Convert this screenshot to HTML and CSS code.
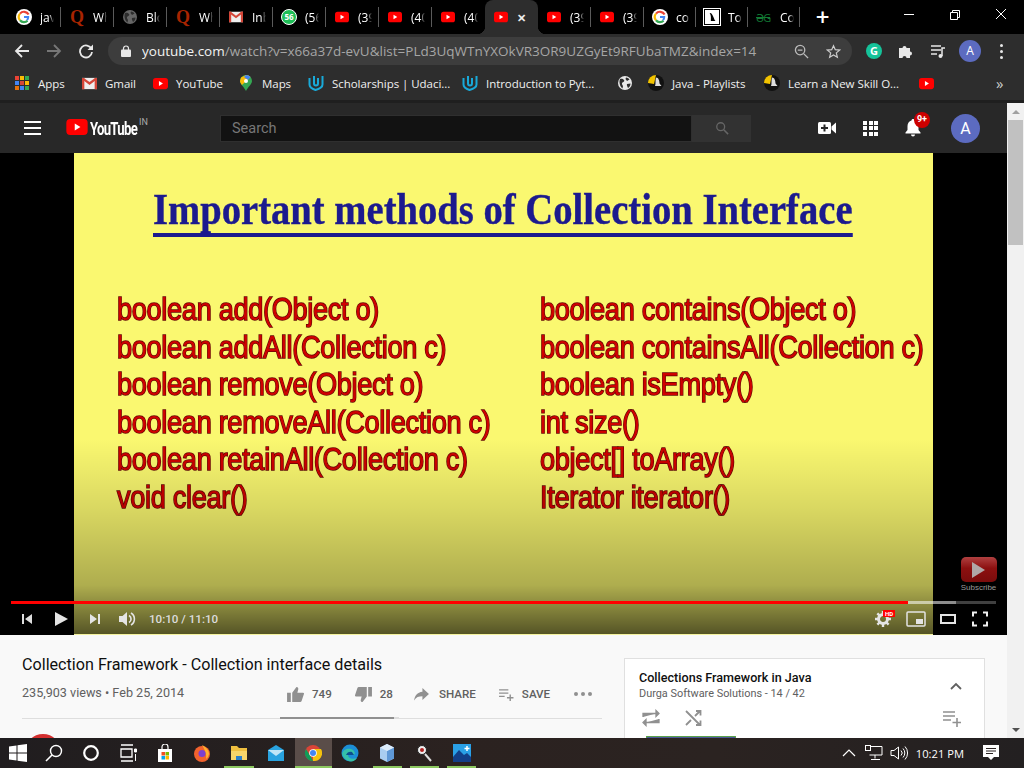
FILE: index.html
```html
<!DOCTYPE html>
<html lang="en">
<head>
<meta charset="utf-8">
<title>Collection Framework - Collection interface details</title>
<link rel="stylesheet" href="styles.css">
</head>
<body>
<svg class="defs" width="0" height="0" aria-hidden="true">
  <symbol id="yt" viewBox="0 0 16 12"><rect width="16" height="12" rx="3" fill="#f00"/><path d="M6.3 3.4 10.6 6 6.3 8.6z" fill="#fff"/></symbol>
  <symbol id="g" viewBox="0 0 16 16"><circle cx="8" cy="8" r="8" fill="#fff"/><path d="M12.6 5.6A5.2 5.2 0 0 0 4 4.6" fill="none" stroke="#ea4335" stroke-width="2.2"/><path d="M4 4.6a5.2 5.2 0 0 0 0 6.6" fill="none" stroke="#fbbc05" stroke-width="2.2"/><path d="M4 11.2a5.2 5.2 0 0 0 7.6.6" fill="none" stroke="#34a853" stroke-width="2.2"/><path d="M8 7h5.2v1.2a5 5 0 0 1-1.6 3.6L10.200 10.500a3 3 0 0 0 .8-1.500H8z" fill="#4285f4"/></symbol>
  <symbol id="globe" viewBox="0 0 16 16"><circle cx="8" cy="8" r="7" fill="currentColor"/><path d="M3 4c2-.5 3 0 4 1s-.5 2-1.500 2.500S5 10 6 11l-.5 2.500C3.500 12 1.500 8 3 4zM9 2.500c1.500 0 3 1 3.500 2L10 6 8.500 4zM10 9l3.500-.5c0 2-1 3.500-2.500 4.500-.5-1-1.500-3-1-4z" fill="#2d2d2d"/></symbol>
  <symbol id="gmail" viewBox="0 0 16 12"><rect width="16" height="12" fill="#eee"/><path d="M0 0h2.500v12H0zM13.500 0H16v12h-2.500z" fill="#d44638"/><path d="M0 0h2l6 4.500L14 0h2v1.500L8 7.500 0 1.500z" fill="#d44638"/></symbol>
  <symbol id="udacity" viewBox="0 0 16 16"><path d="M1.500 3v6.500c0 2.500 3 4.500 6 5.500 3-.8 7-3 7-5.500V1" fill="none" stroke="#19a9d8" stroke-width="2"/><path d="M6 1v7.500c0 1.500 1 2 2 2s2-.5 2-2V3" fill="none" stroke="#19a9d8" stroke-width="2"/></symbol>
  <symbol id="java" viewBox="0 0 16 16"><circle cx="8" cy="8" r="8" fill="#111"/><path d="M0 8a8 8 0 0 1 8-8L6 9z" fill="#f2c300"/><path d="M8 2.500c2.500 0 3.500 3 3.500 6l2 2.500H7c1-2 0-5.500 1-8.500z" fill="#ddd"/></symbol>
  <symbol id="search" viewBox="0 0 16 16"><circle cx="6.500" cy="6.500" r="4.500" fill="none" stroke="currentColor" stroke-width="1.500"/><path d="m10 10 5 5" stroke="currentColor" stroke-width="1.700"/></symbol>
</svg>

<div class="tabstrip">
  <div class="tab"><svg class="ico16"><use href="#g"/></svg><span class="tab-title">java</span><i class="sep"></i></div>
  <div class="tab"><span class="q">Q</span><span class="tab-title">Wh</span><i class="sep"></i></div>
  <div class="tab"><svg class="ico16 globe-dark"><use href="#globe"/></svg><span class="tab-title">Blo</span><i class="sep"></i></div>
  <div class="tab"><span class="q">Q</span><span class="tab-title">Wh</span><i class="sep"></i></div>
  <div class="tab"><svg class="ico14"><use href="#gmail"/></svg><span class="tab-title">Inb</span><i class="sep"></i></div>
  <div class="tab"><span class="wa">56</span><span class="tab-title">(56</span><i class="sep"></i></div>
  <div class="tab"><svg class="ico14"><use href="#yt"/></svg><span class="tab-title">(39</span><i class="sep"></i></div>
  <div class="tab"><svg class="ico14"><use href="#yt"/></svg><span class="tab-title">(40</span><i class="sep"></i></div>
  <div class="tab"><svg class="ico14"><use href="#yt"/></svg><span class="tab-title">(40</span></div>
  <div class="tab tab-active"><svg class="ico14"><use href="#yt"/></svg><span class="tab-close">✕</span></div>
  <div class="tab"><svg class="ico14"><use href="#yt"/></svg><span class="tab-title">(39</span><i class="sep"></i></div>
  <div class="tab"><svg class="ico14"><use href="#yt"/></svg><span class="tab-title">(39</span><i class="sep"></i></div>
  <div class="tab tab-n"><svg class="ico16"><use href="#g"/></svg><span class="tab-title">co</span><i class="sep"></i></div>
  <div class="tab tab-n"><span class="to"><svg viewBox="0 0 12 12"><path d="M4 2.500c2 0 2 1 3 3s1 3 2 4H5C5 7 5.500 5 4 2.500z" fill="#000"/></svg></span><span class="tab-title">To</span><i class="sep"></i></div>
  <div class="tab tab-n"><span class="gfg">ƏG</span><span class="tab-title">Co</span><i class="sep"></i></div>
  <div class="newtab">+</div>
  <div class="winctl">
    <svg viewBox="0 0 46 28"><path d="M18 14.500h10" stroke="#fff"/></svg>
    <svg viewBox="0 0 46 28"><path d="M18.500 12.500h7v7h-7zM20.500 12.500v-2h7v7h-2" fill="none" stroke="#fff"/></svg>
    <svg viewBox="0 0 46 28"><path d="m18 9 10 10m0-10L18 19" stroke="#fff"/></svg>
  </div>
</div>

<div class="toolbar">
  <svg class="nav" viewBox="0 0 16 16"><path d="M15 8H2m6-6L2 8l6 6" fill="none" stroke="#e8e8e8" stroke-width="1.800"/></svg>
  <svg class="nav" viewBox="0 0 16 16"><path d="M1 8h13M8 2l6 6-6 6" fill="none" stroke="#777" stroke-width="1.800"/></svg>
  <svg class="nav" viewBox="0 0 16 16"><path d="M13.500 6A6 6 0 1 0 14 9" fill="none" stroke="#e8e8e8" stroke-width="1.800"/><path d="M15 1.500V7H9.500z" fill="#e8e8e8"/></svg>
  <div class="omnibox">
    <svg class="lock" viewBox="0 0 10 12"><path d="M2.500 5V3.500a2.500 2.500 0 0 1 5 0V5" fill="none" stroke="#e8e8e8" stroke-width="1.200"/><rect y="4.500" width="10" height="7.500" rx="1" fill="#e8e8e8"/></svg>
    <div class="url"><b>youtube.com</b>/watch?v=x66a37d-evU&amp;list=PLd3UqWTnYXOkVR3OR9UZGyEt9RFUbaTMZ&amp;index=14</div>
    <svg class="omni-ico" viewBox="0 0 16 16"><circle cx="6.500" cy="6.500" r="5" fill="none" stroke="#bbb" stroke-width="1.400"/><path d="M4 6.500h5M10.500 10.500 15 15" stroke="#bbb" stroke-width="1.400"/></svg>
    <svg class="omni-ico" viewBox="0 0 16 16"><path d="m8 1.800 1.900 4.300 4.600.4-3.500 3 1.100 4.600L8 11.600l-4.100 2.500L5 9.500l-3.500-3 4.600-.4z" fill="none" stroke="#ccc" stroke-width="1.300"/></svg>
  </div>
  <div class="grammarly">G</div>
  <svg class="tool-ico" viewBox="0 0 16 16"><path d="M1 5h3.500a2 2 0 1 1 4 0H12v3.500a2 2 0 1 1 0 4V15H8.500a2 2 0 1 0-4 0H1z" fill="#e8e8e8"/></svg>
  <svg class="tool-ico" viewBox="0 0 16 16"><path d="M1 3h10M1 7h10M1 11h6" stroke="#e8e8e8" stroke-width="1.500"/><path d="M12 13V5h3" fill="none" stroke="#e8e8e8" stroke-width="1.500"/><circle cx="10.500" cy="13" r="2" fill="#e8e8e8"/></svg>
  <div class="chrome-avatar">A</div>
  <div class="dots"><i></i><i></i><i></i></div>
</div>

<div class="bookmarks">
  <div class="bm"><span class="apps"><i class="c1"></i><i class="c2"></i><i class="c3"></i><i class="c4"></i><i class="c5"></i><i class="c2"></i><i class="c6"></i><i class="c4"></i><i class="c3"></i></span>Apps</div>
  <div class="bm"><svg class="ico14"><use href="#gmail"/></svg>Gmail</div>
  <div class="bm"><svg class="ico14"><use href="#yt"/></svg>YouTube</div>
  <div class="bm"><svg class="ico-map" viewBox="0 0 12 16"><path d="M6 0a6 6 0 0 1 6 6c0 3-4 6-6 10C4 12 0 9 0 6a6 6 0 0 1 6-6z" fill="#34a853"/><path d="M1 2.500 6 0a6 6 0 0 1 4.500 2L2 10C1 8.500 0 7.500 0 6z" fill="#fbbc05"/><path d="M6 0a6 6 0 0 1 4.500 2L8 5 4 2z" fill="#4285f4"/><circle cx="6" cy="6" r="2" fill="#fff"/></svg>Maps</div>
  <div class="bm"><svg class="ico16"><use href="#udacity"/></svg>Scholarships | Udaci...</div>
  <div class="bm"><svg class="ico16"><use href="#udacity"/></svg>Introduction to Pyt...</div>
  <div class="bm"><svg class="ico16 globe-light"><use href="#globe"/></svg></div>
  <div class="bm"><svg class="ico16"><use href="#java"/></svg>Java - Playlists</div>
  <div class="bm"><svg class="ico16"><use href="#java"/></svg>Learn a New Skill O...</div>
  <div class="bm"><svg class="ico14"><use href="#yt"/></svg></div>
  <div class="bm bm-more">»</div>
</div>

<div class="window">
  <main class="page">
    <header class="masthead">
      <div class="burger"><i></i><i></i><i></i></div>
      <div class="logo"><svg class="logo-mark"><use href="#yt"/></svg><span class="logo-text">YouTube</span><sup class="logo-in">IN</sup></div>
      <div class="searchbox"><span class="search-input">Search</span><span class="search-btn"><svg class="ico14"><use href="#search"/></svg></span></div>
      <div class="mast-right">
        <svg class="mast-ico" viewBox="0 0 18 14"><rect y="1" width="13" height="12" rx="1.500" fill="#fff"/><path d="M6.500 3.500v7M3 7h7" stroke="#282828" stroke-width="2"/><path d="m13.500 5.500 4.500-4v11l-4.500-4z" fill="#fff"/></svg>
        <div class="gridico"><i></i><i></i><i></i><i></i><i></i><i></i><i></i><i></i><i></i></div>
        <div class="bell"><svg viewBox="0 0 16 18"><path d="M8 0c1 0 1.500.7 1.500 1.500C12 2.200 13.500 4.500 13.500 7v4l2 2.500v1H.5v-1l2-2.500V7c0-2.500 1.500-4.800 4-5.500C6.500.7 7 0 8 0zM6 15.500h4a2 2 0 0 1-4 0z" fill="#fff"/></svg><span class="badge">9+</span></div>
        <div class="avatar">A</div>
      </div>
    </header>

    <section class="player">
      <div class="slide">
        <h1 class="slide-title">Important methods of Collection Interface</h1>
        <div class="slide-cols">
          <ul class="slide-list">
            <li>boolean add(Object o)</li>
            <li>boolean addAll(Collection c)</li>
            <li>boolean remove(Object o)</li>
            <li>boolean removeAll(Collection c)</li>
            <li>boolean retainAll(Collection c)</li>
            <li>void clear()</li>
          </ul>
          <ul class="slide-list">
            <li>boolean contains(Object o)</li>
            <li>boolean containsAll(Collection c)</li>
            <li>boolean isEmpty()</li>
            <li>int size()</li>
            <li>object[] toArray()</li>
            <li>Iterator iterator()</li>
          </ul>
        </div>
      </div>
      <div class="shade"></div>
      <div class="watermark"><span class="wm-btn"><i></i></span><span class="wm-text">Subscribe</span></div>
      <div class="chrome-bottom">
        <div class="progress"><i class="p-played"></i><i class="p-buffer"></i><i class="p-rest"></i></div>
        <div class="controls">
          <svg class="ctl" viewBox="0 0 14 14"><path d="M2 2h2v10H2zM12 2v10L5 7z" fill="#ddd"/></svg>
          <svg class="ctl" viewBox="0 0 14 14"><path d="M1 0v14l13-7z" fill="#e4e4e4"/></svg>
          <svg class="ctl" viewBox="0 0 14 14"><path d="M2 2v10l7-5zM10 2h2v10h-2z" fill="#e4e4e4"/></svg>
          <svg class="ctl" viewBox="0 0 18 16"><path d="M1 5h3.500L9 1v14l-4.500-4H1z" fill="#e4e4e4"/><path d="M11 4.500a4 4 0 0 1 0 7M13 2a7 7 0 0 1 0 12" fill="none" stroke="#e4e4e4" stroke-width="1.600"/></svg>
          <span class="time">10:10 / 11:10</span>
          <span class="ctl-right">
            <span class="gear"><svg viewBox="0 0 16 16"><circle cx="8" cy="8" r="4.500" fill="none" stroke="#e4e4e4" stroke-width="3"/><path d="M8 0v16M0 8h16M2.300 2.300l11.400 11.400M13.700 2.300 2.300 13.700" stroke="#e4e4e4" stroke-width="2.400" stroke-dasharray="3 10"/></svg><b class="hd">HD</b></span>
            <svg class="ctl-r" viewBox="0 0 20 16"><rect x="1" y="1" width="18" height="14" rx="1" fill="none" stroke="#e4e4e4" stroke-width="1.500"/><rect x="10" y="8" width="7" height="5" fill="#e4e4e4"/></svg>
            <svg class="ctl-r" viewBox="0 0 20 16"><rect x="3" y="4" width="14" height="8" fill="none" stroke="#e4e4e4" stroke-width="2"/></svg>
            <svg class="ctl-r" viewBox="0 0 20 16"><path d="M3 5.500V1.500h4M13 1.500h4v4M17 10.500v4h-4M7 14.500H3v-4" fill="none" stroke="#f0f0f0" stroke-width="2"/></svg>
          </span>
        </div>
      </div>
    </section>

    <section class="below">
      <div class="primary">
        <h2 class="video-title">Collection Framework - Collection interface details</h2>
        <div class="meta-row">
          <span class="views">235,903 views • Feb 25, 2014</span>
          <span class="actions">
            <span class="act act-like"><svg class="act-ico" viewBox="0 0 18 16"><path d="M0 6h4v10H0zM5.500 16V6L10 0c1.500 0 2 1 2 2l-1 4h6c1 0 1.300.8 1 1.500l-2.500 7.500c-.3.700-.8 1-1.500 1z" fill="#909090"/></svg>749</span>
            <span class="act act-dis"><svg class="act-ico" viewBox="0 0 18 16"><path d="M18 10h-4V0h4zM12.500 0v10L8 16c-1.500 0-2-1-2-2l1-4H1c-1 0-1.300-.8-1-1.500L2.500 1C2.800.3 3.300 0 4 0z" fill="#909090"/></svg>28</span>
            <span class="act act-share"><svg class="act-ico" viewBox="0 0 16 14"><path d="M9 0l7 6.500L9 13V9C5 9 2 10 0 13.500 .7 8.500 3.500 4.500 9 4z" fill="#909090"/></svg>SHARE</span>
            <span class="act act-save"><svg class="act-ico" viewBox="0 0 16 14"><path d="M0 2h10M0 5.500h10M0 9h6M12 7v7M8.500 10.500h7" stroke="#909090" stroke-width="1.500"/></svg>SAVE</span>
            <span class="more"><i></i><i></i><i></i></span>
          </span>
        </div>
        <div class="rule"><i class="sentiment"></i></div>
        <div class="owner-dot"></div>
      </div>
      <aside class="playlist">
        <div class="pl-head">
          <div>
            <div class="pl-title">Collections Framework in Java</div>
            <div class="pl-sub">Durga Software Solutions - 14 / 42</div>
          </div>
          <svg class="pl-chev" viewBox="0 0 12 8"><path d="m1 7 5-5 5 5" fill="none" stroke="#606060" stroke-width="1.800"/></svg>
        </div>
        <div class="pl-tools">
          <svg class="pl-ico" viewBox="0 0 18 18"><path d="M1 8V4.500h13M14 1.500V7.500l3-3zM17 10v3.500H4M4 10.500v6l-3-3z" fill="#909090" stroke="#909090" stroke-width="1.300"/></svg>
          <svg class="pl-ico" viewBox="0 0 18 18"><path d="m2 2 14 14M2 16l5-5M11 7l5-5M12 2h4.500v4.500M12 16h4.500v-4.500" fill="none" stroke="#909090" stroke-width="1.800"/></svg>
          <svg class="pl-ico pl-add" viewBox="0 0 18 18"><path d="M0 3h12M0 7h12M0 11h8M14 9v9M9.500 13.500h8.500" stroke="#909090" stroke-width="1.600"/></svg>
        </div>
        <div class="pl-thumb"></div>
      </aside>
    </section>
  </main>
  <div class="scrollbar">
    <span class="arrow-up"></span>
    <span class="thumb"></span>
    <span class="arrow-down"></span>
  </div>
</div>

<footer class="taskbar">
  <span class="tb"><svg class="tb-ico" viewBox="0 0 18 18"><path d="M0 2.500 7.500 1.400V8.500H0zM8.500 1.300 18 0v8.500H8.500zM0 9.500h7.500v7.100L0 15.500zM8.500 9.500H18V18L8.500 16.700z" fill="#fff"/></svg></span>
  <span class="tb"><svg class="tb-ico" viewBox="0 0 18 18"><circle cx="11" cy="7" r="5.500" fill="none" stroke="#fff" stroke-width="1.400"/><path d="M7 11 1 17" stroke="#fff" stroke-width="1.600"/></svg></span>
  <span class="tb"><svg class="tb-ico" viewBox="0 0 18 18"><circle cx="9" cy="9" r="6.800" fill="none" stroke="#fff" stroke-width="2.200"/></svg></span>
  <span class="tb"><svg class="tb-ico" viewBox="0 0 18 18"><path d="M2 1h12M2 17h12M2 5h11v8H2z" fill="none" stroke="#fff" stroke-width="1.300"/><path d="M15.500 5h2v3h-2zM16.500 10v7" fill="#fff" stroke="#fff"/></svg></span>
  <span class="tb"><svg class="tb-ico" viewBox="0 0 18 18"><path d="M6 5V3a3 3 0 0 1 6 0v2" fill="none" stroke="#fff" stroke-width="1.200"/><rect x="2" y="5" width="14" height="13" fill="#fff"/><path d="M5.500 8H9v3.500H5.500z" fill="#f25022"/><path d="M9.500 8H13v3.500H9.500z" fill="#7fba00"/><path d="M5.500 12H9v3.500H5.500z" fill="#00a4ef"/><path d="M9.500 12H13v3.500H9.500z" fill="#ffb900"/></svg></span>
  <span class="tb"><svg class="tb-ico" viewBox="0 0 18 18"><circle cx="9" cy="10" r="8" fill="#f2622e"/><path d="M9 1c4 2 7 5 7 9a7 7 0 0 1-3 5c1-4-1-9-4-14z" fill="#ffb02e"/><circle cx="9" cy="9.500" r="3.500" fill="#7d3fd1"/></svg></span>
  <span class="tb tb-on"><svg class="tb-ico" viewBox="0 0 18 18"><path d="M1 2h6l2 2h8v3H1z" fill="#f0c040"/><path d="M1 7h16v9H1z" fill="#f7d56a"/><path d="M6 16v-4h6v4z" fill="#2a7fc9"/></svg></span>
  <span class="tb"><svg class="tb-ico" viewBox="0 0 18 18"><path d="M1 6 9 1l8 5v11H1z" fill="#29a3e0"/><path d="m1 6 8 6 8-6" fill="#bfe6f7"/></svg></span>
  <span class="tb tb-on tb-cur"><svg class="tb-ico" viewBox="0 0 18 18"><circle cx="9" cy="9" r="8" fill="#db4437"/><path d="M9 5h8a8 8 0 0 1-8 12z" fill="#f4c20d"/><path d="M2 5l5 8 2 4a8 8 0 0 1-7-12z" fill="#0f9d58"/><circle cx="9" cy="9" r="3.800" fill="#fff"/><circle cx="9" cy="9" r="3" fill="#4285f4"/></svg></span>
  <span class="tb"><svg class="tb-ico" viewBox="0 0 18 18"><circle cx="9" cy="9" r="8.500" fill="#1c8ed6"/><path d="M1 10c1-5 6-6 9-5s5 4 3 6H7c0 3 4 5 9 3-2 3-5 4-8 3-4-1-6-4-7-7z" fill="#35c1a8"/><path d="M5 11c1-3 4-4 6-3l2 3z" fill="#0d4f8f"/></svg></span>
  <span class="tb tb-on"><svg class="tb-ico" viewBox="0 0 18 18"><path d="m9 0 7 3.500v11L9 18l-7-3.500v-11z" fill="#a9cdf0"/><path d="m9 7 7-3.500v11L9 18z" fill="#5f98d6"/><path d="M9 7 2 3.500 9 0l7 3.500z" fill="#dcecfb"/></svg></span>
  <span class="tb tb-on"><svg class="tb-ico" viewBox="0 0 18 18"><circle cx="7" cy="6" r="4.500" fill="#eee" stroke="#222" stroke-width="1"/><circle cx="7" cy="6" r="2" fill="#b02020"/><path d="m10 10 6 7" stroke="#ddd" stroke-width="2"/></svg></span>
  <span class="tb tb-on"><svg class="tb-ico" viewBox="0 0 18 18"><rect width="18" height="18" fill="#2aa0e6"/><path d="M0 18V13l6-7 5 5 3-2 4 4v5z" fill="#123f88"/><path d="M14 2v5M11.500 4.500h5" stroke="#fff" stroke-width="1.500"/></svg></span>
  <span class="tray">
    <svg class="tray-ico" viewBox="0 0 14 8"><path d="m1 7 6-6 6 6" fill="none" stroke="#fff" stroke-width="1.200"/></svg>
    <svg class="tray-net" viewBox="0 0 18 16"><path d="M4.500 1.500H17V10H4.500M10 10v3.500M6 14.500h9" fill="none" stroke="#fff"/><rect x=".5" y=".5" width="5" height="5" fill="#2a2322" stroke="#fff"/></svg>
    <svg class="tray-vol" viewBox="0 0 18 16"><path d="M1 5.500h3L8.500 2v12L4 10.500H1z" fill="none" stroke="#fff"/><path d="M11 5.500a3.500 3.500 0 0 1 0 5M13 3.500a6.500 6.500 0 0 1 0 9M15 1.500a9.500 9.500 0 0 1 0 13" fill="none" stroke="#fff"/></svg>
    <span class="clock">10:21 PM</span>
    <svg class="tray-msg" viewBox="0 0 16 16"><path d="M0 0h16v12h-5l-3 3-3-3H0z" fill="#fff"/><path d="M3 3.500h10M3 6h10M3 8.500h7" stroke="#2a2322"/></svg>
  </span>
</footer>
</body>
</html>
```
FILE: styles.css
```css
* { box-sizing: border-box; }
html, body { margin: 0; padding: 0; width: 1024px; height: 768px; overflow: hidden; background: #000; }
body { display: flex; flex-direction: column; font-family: "Open Sans", "Noto Sans", sans-serif; }
.defs { position: absolute; }
i { display: block; font-style: normal; }
svg { display: block; flex: none; }
.ico16 { width: 16px; height: 16px; }
.ico14 { width: 14px; height: 14px; }

/* tab strip */
.tabstrip { height: 34px; flex: none; background: #000; display: flex; align-items: stretch; padding-left: 8px; color: #fff; }
.tab { width: 53px; display: flex; align-items: center; padding-left: 8px; position: relative; }
.tab-n { width: 52px; }
.tab-title { position: absolute; left: 32px; width: 14px; overflow: hidden; white-space: nowrap; font-size: 12px; color: #fff; -webkit-mask-image: linear-gradient(to right, #000 65%, transparent); mask-image: linear-gradient(to right, #000 65%, transparent); }
.tab .ico14 { width: 14px; height: 14px; margin-left: 1px; }
.sep { position: absolute; right: 0; top: 7px; width: 1px; height: 20px; background: #5a5a5a; }
.q { width: 16px; font: bold 18px "Liberation Serif", serif; color: #a82400; text-align: center; }
.wa { width: 16px; height: 16px; border-radius: 50%; background: #1ebe57; border: 1px solid #fff; color: #fff; font-size: 8px; font-weight: 700; line-height: 14px; text-align: center; }
.to { width: 16px; height: 16px; background: #fff; border: 1.500px solid #000; outline: 1px solid #fff; display: block; }
.gfg { width: 16px; font-size: 11px; font-weight: 400; color: #127a34; letter-spacing: -1px; text-decoration: line-through; }
.globe-dark { color: #666; }
.globe-light { color: #e8e8e8; }
.tab-active { background: #2d2d2d; border-radius: 8px 8px 0 0; }
.tab-active::before, .tab-active::after { content: ""; position: absolute; bottom: 0; width: 8px; height: 8px; }
.tab-active::before { left: -8px; background: radial-gradient(circle at 0 0, transparent 8px, #2d2d2d 8.500px); }
.tab-active::after { right: -8px; background: radial-gradient(circle at 100% 0, transparent 8px, #2d2d2d 8.500px); }
.tab-close { position: absolute; left: 32px; font-size: 11px; font-weight: 700; color: #eee; }
.newtab { width: 44px; padding-left: 1px; text-align: center; font-size: 24px; line-height: 33px; font-weight: 600; color: #fff; }
.winctl { margin-left: auto; display: flex; }
.winctl svg { width: 46px; height: 28px; }

/* toolbar */
.toolbar { height: 34px; flex: none; background: #2d2d2d; display: flex; align-items: center; padding-left: 14px; }
.nav { width: 16px; height: 16px; margin-right: 16px; }
.nav:nth-child(3) { margin-right: 14px; }
.omnibox { width: 744px; height: 28px; border-radius: 14px; background: #3d3d3d; display: flex; align-items: center; padding-left: 13px; }
.lock { width: 10px; height: 12px; margin-right: 11px; }
.url { flex: 1; font-size: 13.500px; line-height: 28px; color: #a6a6a6; white-space: nowrap; overflow: hidden; }
.url b { font-weight: 400; color: #f2f2f2; }
.omni-ico { width: 15px; height: 15px; margin-right: 17px; }
.omni-ico:last-child { margin-right: 11px; }
.grammarly { width: 16px; height: 16px; margin-left: 14px; border-radius: 50%; background: #15c39a; color: #fff; font-size: 11px; font-weight: 700; line-height: 16px; text-align: center; }
.tool-ico { width: 16px; height: 16px; margin-left: 16px; }
.chrome-avatar { width: 22px; height: 22px; margin-left: 13px; border-radius: 50%; background: #5c6bc0; color: #fff; font-size: 12px; line-height: 22px; text-align: center; }
.dots { margin-left: 19px; display: flex; flex-direction: column; gap: 3px; }
.dots i { width: 3px; height: 3px; border-radius: 50%; background: #e8e8e8; }

/* bookmarks */
.bookmarks { height: 32px; flex: none; background: #2d2d2d; display: grid; grid-template-columns: 67px 71px 87px 68px 154px 155px 31px 116px 155px 77px 1fr; align-items: center; padding: 0 0 2px 15px; color: #f0f0f0; font-size: 11.500px; letter-spacing: -0.050px; }
.bm { display: flex; align-items: center; gap: 8px; white-space: nowrap; }
.bm .ico14 { width: 15px; height: 15px; }
.apps { width: 14px; height: 14px; display: grid; grid-template-columns: repeat(3, 4px); gap: 1px; margin-right: 1px; }
.apps i { width: 4px; height: 4px; }
.c1 { background: #ea4335; } .c2 { background: #fbbc05; } .c3 { background: #34a853; }
.c4 { background: #4285f4; } .c5 { background: #d44638; } .c6 { background: #e8710a; }
.ico-map { width: 12px; height: 16px; margin-right: 2px; }
.bm-more { font-size: 15px; color: #ccc; }

/* window */
.window { flex: 1; min-height: 0; display: flex; background: #f9f9f9; }
.page { width: 1007px; display: flex; flex-direction: column; overflow: hidden; }
.masthead { height: 53px; flex: none; background: #282828; border-top: 3px solid #1f1f1f; display: flex; align-items: center; font-family: Roboto, sans-serif; }
.burger { width: 17px; margin-left: 24px; display: flex; flex-direction: column; gap: 4px; }
.burger i { height: 2px; background: #fff; }
.logo { display: flex; align-items: flex-start; margin-left: 25px; width: 154px; }
.logo-mark { width: 22px; height: 16px; }
.logo-text { display: block; width: 47px; margin: 1px 0 0 2px; font-size: 18.500px; font-weight: 700; letter-spacing: -1px; color: #fff; line-height: 18px; transform: scaleX(.71); transform-origin: left; white-space: nowrap; }
.logo-in { margin: -3px 0 0 2px; font-size: 9px; line-height: 12px; color: #aaa; }
.searchbox { width: 531px; height: 27px; display: flex; }
.search-input { width: 472px; background: #121212; border: 1px solid #2f2f2f; font-size: 14.500px; line-height: 25px; color: #777; padding-left: 11px; }
.search-btn { flex: 1; background: #323232; display: flex; align-items: center; justify-content: center; color: #666; }
.mast-right { margin-left: 67px; display: flex; align-items: center; }
.mast-ico { width: 18px; height: 14px; }
.gridico { margin-left: 27px; width: 15px; display: grid; grid-template-columns: repeat(3, 4px); gap: 1.500px; }
.gridico i { height: 4px; background: #fff; }
.bell { margin-left: 27px; width: 16px; position: relative; }
.bell svg { width: 16px; height: 18px; }
.badge { position: absolute; left: 9px; top: -7px; width: 16px; height: 16px; border-radius: 50%; background: #cc0000; color: #fff; font-size: 9px; font-weight: 700; line-height: 15px; text-align: center; }
.avatar { margin-left: 30px; width: 29px; height: 29px; border-radius: 50%; background: #5c6bc0; color: #fff; font-size: 16px; line-height: 29px; text-align: center; }

/* player */
.player { height: 482px; flex: none; background: #000; position: relative; overflow: hidden; }
.slide { width: 859px; height: 100%; margin-left: 74px; background: #faf870; padding: 33px 0 0 43px; border-bottom: 1px solid #f5f3a0; overflow: hidden; }
.slide-title { margin: 0 0 0 36px; font: 700 44px/47px "Liberation Serif", serif; color: #1c1a8e; -webkit-text-stroke: .4px #1c1a8e; white-space: nowrap; display: inline-block; border-bottom: 4px solid #1c1a8e; transform: scaleX(.878); transform-origin: left; }
.slide-cols { display: grid; grid-template-columns: 423px 1fr; margin-top: 54px; }
.slide-list { list-style: none; margin: 0; padding: 0; font: 400 32px/37.500px "Liberation Sans", sans-serif; letter-spacing: -0.400px; color: #d00000; -webkit-text-stroke: 1.500px #620606; paint-order: stroke fill; white-space: nowrap; transform: scaleX(.85); transform-origin: left; }
.shade { position: absolute; left: 0; right: 0; bottom: 1px; height: 195px; background: linear-gradient(to bottom, rgba(0,0,0,0), rgba(0,0,0,.13) 35%, rgba(0,0,0,.3) 75%, rgba(0,0,0,.66)); }
.watermark { position: absolute; right: 10px; top: 404px; width: 37px; display: flex; flex-direction: column; align-items: center; }
.wm-btn { width: 36px; height: 25px; border-radius: 5px; background: linear-gradient(#b04040, #8c1010 45%, #7a0c0c); display: flex; align-items: center; justify-content: center; }
.wm-btn i { border-left: 13px solid #b0a8a8; border-top: 8px solid transparent; border-bottom: 8px solid transparent; }
.wm-text { font: 8px/11px "Liberation Sans", sans-serif; color: #999; }
.chrome-bottom { position: absolute; left: 11px; width: 985px; top: 448px; }
.progress { height: 3px; display: flex; }
.p-played { width: 897px; background: #f00; }
.p-buffer { width: 48px; background: rgba(255,255,255,.55); }
.p-rest { flex: 1; background: rgba(255,255,255,.25); }
.controls { height: 30px; display: flex; align-items: center; }
.ctl { width: 14px; height: 14px; margin-left: 9px; margin-right: 11px; }
.ctl:nth-child(4) { width: 18px; height: 16px; margin-left: 5px; margin-right: 13px; }
.time { font: 500 11.600px Roboto, sans-serif; color: #ddd; }
.ctl-right { margin-left: auto; display: flex; align-items: center; }
.gear { position: relative; width: 16px; height: 16px; margin-right: 3px; }
.gear svg { width: 16px; height: 16px; }
.hd { position: absolute; left: 8px; top: -1px; width: 12px; height: 7px; background: #f00; color: #fff; font: 700 6px/7px Roboto, sans-serif; text-align: center; }
.ctl-r { width: 20px; height: 16px; margin-left: 12px; }
.ctl-r:last-child { margin-right: 6px; }

/* below */
.below { flex: 1; min-height: 0; display: flex; padding: 21px 0 0 22px; font-family: Roboto, sans-serif; overflow: hidden; }
.primary { width: 580px; position: relative; flex: none; }
.video-title { margin: 0; font-size: 16.150px; font-weight: 400; line-height: 18px; color: #0f0f0f; }
.meta-row { margin-top: 9px; height: 24px; display: flex; align-items: center; position: relative; }
.views { font-size: 12.600px; color: #606060; padding-bottom: 5px; }
.actions { position: absolute; left: 265px; top: -1px; height: 24px; display: flex; align-items: center; font-size: 11.600px; font-weight: 500; color: #606060; }
.act { display: flex; align-items: center; gap: 8px; }
.act-ico { width: 17px; height: 15px; }
.act-like { margin-right: 23px; }
.act-dis { margin-right: 21px; }
.act-share { margin-right: 23px; gap: 10px; }
.act-share .act-ico, .act-save .act-ico { width: 15px; height: 13px; }
.more { margin-left: 24px; display: flex; gap: 3px; }
.more i { width: 4px; height: 4px; border-radius: 50%; background: #909090; }
.rule { margin-top: 11px; height: 1px; background: #dedede; position: relative; }
.sentiment { position: absolute; left: 258px; top: -1px; width: 119px; height: 2px; background: linear-gradient(to right, #909090 96%, #dedede 96%); }
.owner-dot { width: 36px; height: 36px; margin: 15px 0 0 3px; border-radius: 50%; background: #d32f2f; }
.playlist { width: 361px; height: 120px; margin: 2px 0 0 22px; flex: none; background: #fff; border: 1px solid #e0e0e0; padding: 11px 14px 0; }
.pl-head { display: flex; justify-content: space-between; align-items: center; }
.pl-title { font-size: 12.600px; font-weight: 500; line-height: 15px; color: #0f0f0f; }
.pl-sub { margin-top: 2px; font-size: 10.900px; line-height: 14px; color: #606060; }
.pl-chev { width: 12px; height: 8px; margin-right: 8px; }
.pl-tools { margin-top: 8px; display: flex; align-items: center; padding-left: 3px; }
.pl-ico { width: 18px; height: 18px; margin-right: 24px; }
.pl-add { margin: 0 9px 0 auto; }
.pl-thumb { margin: 9px 0 0 7px; width: 90px; height: 30px; background: linear-gradient(#4a5a9a, #3a4a8a); border: 1px solid #5aa04a; }

/* scrollbar */
.scrollbar { width: 17px; flex: none; background: #f1f1f1; border-top: 3px solid #1f1f1f; display: flex; flex-direction: column; align-items: center; padding-top: 7px; }
.arrow-up { border-left: 4px solid transparent; border-right: 4px solid transparent; border-bottom: 4px solid #a0a0a0; }
.thumb { width: 15px; height: 125px; margin-top: 6px; background: #c1c1c1; }
.arrow-down { margin-top: auto; margin-bottom: 6px; border-left: 4px solid transparent; border-right: 4px solid transparent; border-top: 4px solid #505050; }

/* taskbar */
.taskbar { height: 30px; flex: none; display: flex; align-items: stretch; background: linear-gradient(to right, #201d1f, #2b2220 45%, #2b2321 70%, #232021); color: #fff; }
.tb { width: 37.100px; display: flex; align-items: center; justify-content: center; position: relative; }
.tb:first-child { width: 35px; }
.tb-ico { width: 18px; height: 18px; }
.tb-on::after { content: ""; position: absolute; left: 4px; right: 4px; bottom: 0; height: 2px; background: #8cc860; }
.tb-cur { background: #5a4d49; }
.tb-cur::after { left: 0; right: 0; }
.tray { margin-left: auto; display: flex; align-items: center; }
.tray-ico { width: 14px; height: 8px; margin-right: 9px; }
.tray-net { width: 18px; height: 16px; margin-right: 7px; }
.tray-vol { width: 18px; height: 16px; margin-right: 8px; }
.clock { font-size: 11.200px; color: #fff; margin-right: 19px; }
.tray-msg { width: 16px; height: 16px; margin-right: 25px; }
```
